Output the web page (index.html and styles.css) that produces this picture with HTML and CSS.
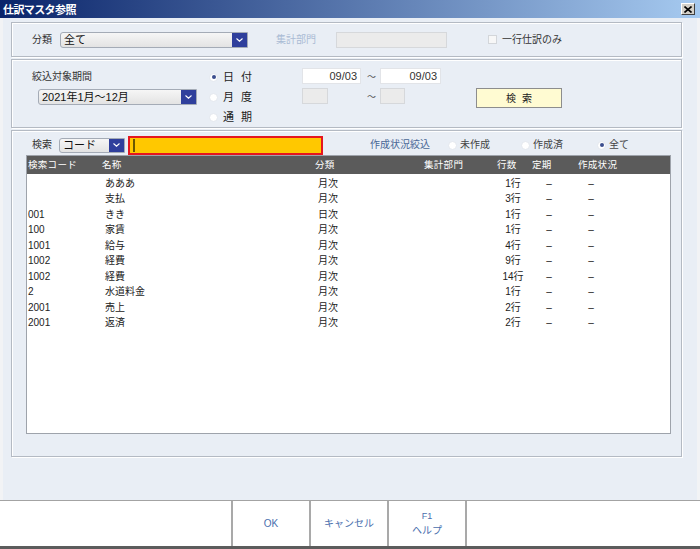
FILE: index.html
```html
<!DOCTYPE html>
<html lang="ja">
<head>
<meta charset="utf-8">
<title>仕訳マスタ参照</title>
<link rel="stylesheet" href="styles.css">
</head>
<body>
<div class="window">
  <div class="titlebar">
    <span class="title">仕訳マスタ参照</span>
    <span class="close"><svg width="8" height="7" viewBox="0 0 8 7"><path d="M0.5 0.5 L7.5 6.5 M7.5 0.5 L0.5 6.5" stroke="#000" stroke-width="1.6"/></svg></span>
  </div>
  <div class="main">
    <div class="group g1">
      <span class="lbl lbl-bunrui">分類</span>
      <div class="select sel-bunrui"><span class="sel-text">全て</span><span class="sel-btn"><svg width="7" height="4" viewBox="0 0 7 4"><path d="M0.5 0.5 L3.5 3.2 L6.5 0.5" fill="none" stroke="#fff" stroke-width="1.1"/></svg></span></div>
      <span class="lbl disabled-lbl">集計部門</span>
      <span class="input disabled inp-bumon"></span>
      <span class="checkbox"></span>
      <span class="lbl">一行仕訳のみ</span>
    </div>

    <div class="group g2">
      <span class="lbl period-lbl">絞込対象期間</span>
      <span class="radio-item r1"><span class="radio checked"></span><span class="rlbl">日 付</span></span>
      <span class="date-row d1"><span class="input date w59">09/03</span><span class="tilde">～</span><span class="input date w61">09/03</span></span>

      <div class="select sel-period"><span class="sel-text">2021年1月～12月</span><span class="sel-btn"><svg width="7" height="4" viewBox="0 0 7 4"><path d="M0.5 0.5 L3.5 3.2 L6.5 0.5" fill="none" stroke="#fff" stroke-width="1.1"/></svg></span></div>
      <span class="radio-item r2"><span class="radio"></span><span class="rlbl">月 度</span></span>
      <span class="date-row d2"><span class="input disabled w26"></span><span class="tilde t2">～</span><span class="input disabled w25"></span></span>
      <span class="btn-search">検 索</span>

      <span class="radio-item r3"><span class="radio"></span><span class="rlbl">通 期</span></span>
    </div>

    <div class="group g3">
      <div class="search-row">
        <span class="lbl lbl-kensaku">検索</span>
        <div class="select sel-code"><span class="sel-text">コード</span><span class="sel-btn"><svg width="7" height="4" viewBox="0 0 7 4"><path d="M0.5 0.5 L3.5 3.2 L6.5 0.5" fill="none" stroke="#fff" stroke-width="1.1"/></svg></span></div>
        <span class="search-input"><span class="caret"></span></span>
        <span class="status-lbl">作成状況絞込</span>
        <span class="radio-item s1"><span class="radio"></span><span class="slbl">未作成</span></span>
        <span class="radio-item s2"><span class="radio"></span><span class="slbl">作成済</span></span>
        <span class="radio-item s3"><span class="radio checked"></span><span class="slbl">全て</span></span>
      </div>
      <div class="table">
        <div class="thead">
          <span>検索コード</span><span>名称</span><span>分類</span><span>集計部門</span><span>行数</span><span>定期</span><span>作成状況</span>
        </div>
        <div class="tbody">
          <div class="row"><span></span><span>あああ</span><span>月次</span><span class="c">1行</span><span class="c">–</span><span class="c">–</span></div>
          <div class="row"><span></span><span>支払</span><span>月次</span><span class="c">3行</span><span class="c">–</span><span class="c">–</span></div>
          <div class="row"><span>001</span><span>きき</span><span>日次</span><span class="c">1行</span><span class="c">–</span><span class="c">–</span></div>
          <div class="row"><span>100</span><span>家賃</span><span>月次</span><span class="c">1行</span><span class="c">–</span><span class="c">–</span></div>
          <div class="row"><span>1001</span><span>給与</span><span>月次</span><span class="c">4行</span><span class="c">–</span><span class="c">–</span></div>
          <div class="row"><span>1002</span><span>経費</span><span>月次</span><span class="c">9行</span><span class="c">–</span><span class="c">–</span></div>
          <div class="row"><span>1002</span><span>経費</span><span>月次</span><span class="c">14行</span><span class="c">–</span><span class="c">–</span></div>
          <div class="row"><span>2</span><span>水道料金</span><span>月次</span><span class="c">1行</span><span class="c">–</span><span class="c">–</span></div>
          <div class="row"><span>2001</span><span>売上</span><span>月次</span><span class="c">2行</span><span class="c">–</span><span class="c">–</span></div>
          <div class="row"><span>2001</span><span>返済</span><span>月次</span><span class="c">2行</span><span class="c">–</span><span class="c">–</span></div>
        </div>
      </div>
    </div>
  </div>
  <div class="footer">
    <span class="fcell"></span>
    <span class="fcell fbtn">OK</span>
    <span class="fcell fbtn">キャンセル</span>
    <span class="fcell fbtn two"><span>F1</span><span>ヘルプ</span></span>
    <span class="fcell fbtn"></span>
  </div>
</div>
</body>
</html>
```

FILE: styles.css
```css
* { box-sizing: border-box; }
html, body { margin: 0; padding: 0; }
body {
  width: 700px;
  height: 549px;
  overflow: hidden;
  font-family: "Liberation Sans", "Noto Sans CJK JP", sans-serif;
  font-size: 10px;
  color: #333;
  background: #e9eef5;
}
.window {
  width: 700px;
  height: 549px;
  display: flex;
  flex-direction: column;
  background: #e9eef5;
}
.titlebar {
  height: 18px;
  flex: none;
  background: linear-gradient(to right, #0a246a, #a6caf0);
  display: flex;
  align-items: center;
  justify-content: space-between;
  padding: 0 5px 0 3px;
}
.title {
  color: #fff;
  font-weight: bold;
  font-size: 11px;
  line-height: 14px;
  font-family: "Noto Sans CJK JP", sans-serif;
  letter-spacing: -0.6px;
}
.close {
  width: 14px;
  height: 12px;
  background: #d4d0c8;
  border: 1px solid;
  border-color: #fff #404040 #404040 #fff;
  display: flex;
  align-items: center;
  justify-content: center;
}
.main {
  flex: 1;
  display: flex;
  flex-direction: column;
  gap: 2px;
  padding: 4px 0 0 8px;
  border-left: 3px solid #f2f3f5;
  border-right: 3px solid #f2f3f5;
}
.group {
  width: 671px;
  border: 1px solid #b4bac3;
  box-shadow: inset 1px 1px 0 #fff, 1px 1px 0 #fff;
  flex: none;
}
.lbl { line-height: 14px; white-space: nowrap; }

/* group 1 */
.g1 {
  height: 35px;
  display: flex;
  align-items: center;
  padding-left: 20px;
}
.lbl-bunrui { width: 28px; }
.select {
  display: flex;
  height: 16px;
  border: 1px solid #a4abb6;
  border-radius: 3px 0 0 3px;
  background: linear-gradient(#f6f6f6, #e3e3e3);
  overflow: hidden;
}
.sel-text {
  flex: 1;
  padding-left: 3px;
  line-height: 14px;
  font-size: 11px;
  color: #111;
  white-space: nowrap;
}
.sel-btn {
  width: 15px;
  background: #2f3f9c;
  display: flex;
  align-items: center;
  justify-content: center;
}
.sel-bunrui { width: 188px; }
.disabled-lbl { color: #a9bbd4; margin-left: 28px; width: 60px; }
.input {
  display: inline-block;
  height: 16px;
  line-height: 14px;
  font-size: 11px;
}
.disabled { background: #ebebeb; border: 1px solid #d6d8db; }
.inp-bumon { width: 111px; }
.checkbox {
  width: 9px;
  height: 9px;
  background: #f7f7f7;
  border: 1px solid #d3d6da;
  margin-left: 41px;
  margin-right: 5px;
}

/* group 2 */
.g2 {
  height: 69px;
  display: grid;
  grid-template-columns: 177px 93px 174px 86px;
  grid-template-rows: 20px 20px 20px;
  padding: 7px 0 0 20px;
  align-items: center;
}
.period-lbl { grid-column: 1; grid-row: 1; margin-top: -1px; }
.sel-period { grid-column: 1; grid-row: 2; margin-left: 6px; width: 159px; }
.radio-item { display: flex; align-items: center; white-space: nowrap; }
.r1 { grid-column: 2; grid-row: 1; }
.r2 { grid-column: 2; grid-row: 2; }
.r3 { grid-column: 2; grid-row: 3; }
.radio {
  width: 9px;
  height: 9px;
  border-radius: 50%;
  background: #fff;
  border: 1px solid #e3e7ee;
  display: flex;
  align-items: center;
  justify-content: center;
  flex: none;
}
.radio.checked::after {
  content: "";
  width: 4px;
  height: 4px;
  border-radius: 50%;
  background: #3c4e8e;
}
.rlbl {
  margin-left: 5px;
  font-size: 11px;
  line-height: 14px;
  word-spacing: 4px;
  color: #222;
}
.date-row { display: flex; align-items: center; }
.d1 { grid-column: 3; grid-row: 1; margin-top: -2px; }
.d2 { grid-column: 3; grid-row: 2; margin-top: -2px; }
.date {
  background: #fff;
  border: 1px solid #e2e4e8;
  text-align: right;
  padding-right: 3px;
  color: #333;
}
.w59 { width: 59px; }
.w61 { width: 61px; }
.w26 { width: 26px; }
.w25 { width: 25px; }
.tilde {
  width: 10px;
  margin: 0 3px 0 6px;
  font-family: "Noto Sans CJK JP", sans-serif;
  font-size: 9px;
  line-height: 14px;
  padding-top: 1px;
  color: #555;
}
.t2 { margin-left: 39px; }
.btn-search {
  grid-column: 4;
  grid-row: 2;
  height: 20px;
  margin-top: 1px;
  background: #fffbd2;
  border: 1px solid #8d8d8d;
  display: flex;
  align-items: center;
  justify-content: center;
  font-size: 10px;
  word-spacing: 3px;
  color: #222;
}

/* group 3 */
.g3 {
  height: 327px;
  padding: 4px 0 0 14px;
}
.search-row {
  display: flex;
  align-items: center;
  height: 20px;
  padding-left: 6px;
}
.lbl-kensaku { width: 27px; }
.sel-code { width: 66px; height: 15px; }
.sel-code .sel-text { line-height: 13px; }
.search-input {
  width: 195px;
  height: 19px;
  margin-left: 3px;
  background: #ffc800;
  border: 2px solid #e5161e;
  display: flex;
  align-items: center;
  padding-left: 3px;
}
.caret { width: 2px; height: 13px; background: #6a5800; }
.status-lbl { margin-left: 47px; color: #4a6796; line-height: 14px; width: 78px; }
.slbl { margin-left: 3px; line-height: 14px; color: #444; }
.s1 { width: 73px; }
.s2 { width: 76px; }
.table {
  width: 645px;
  height: 279px;
  border: 1px solid #9ea3ab;
  background: #fff;
  display: flex;
  flex-direction: column;
}
.thead {
  height: 18px;
  flex: none;
  background: #5b5b5b;
  color: #fff;
  display: grid;
  grid-template-columns: 74px 213px 109px 73px 35px 46px 1fr;
  align-items: center;
  padding-left: 1px;
  font-size: 9.5px;
  line-height: 12px;
  letter-spacing: 0.3px;
  white-space: nowrap;
}
.tbody { padding-top: 2px; }
.row {
  height: 15.5px;
  display: grid;
  grid-template-columns: 77px 213px 172px 46px 26px 58px;
  align-items: center;
  padding-left: 1px;
  color: #222;
  font-size: 10px;
  line-height: 12px;
  white-space: nowrap;
}
.row .c { text-align: center; }

/* footer */
.footer {
  height: 49px;
  flex: none;
  background: #fff;
  border-top: 1px solid #a3a3a3;
  border-bottom: 3px solid #5c5c5c;
  display: grid;
  grid-template-columns: 231px 78px 78px 78px 1fr;
}
.fcell { display: flex; align-items: center; justify-content: center; }
.fbtn {
  border-left: 2px solid #a9a9a9;
  color: #4a6fae;
  font-size: 10px;
  line-height: 14px;
}
.two { flex-direction: column; gap: 1px; }
.two span:first-child { font-size: 9px; }
```
